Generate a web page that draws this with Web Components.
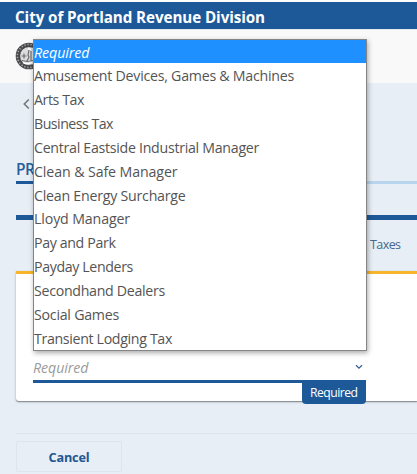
<!DOCTYPE html>
<html lang="en"><head><meta charset="utf-8"><title>City of Portland Revenue Division</title>
<style>
html,body{margin:0;height:474px;overflow:hidden;background:#e8eef5}
body{font-family:"Open Sans","Noto Sans",sans-serif}
</style></head><body>
<revenue-page></revenue-page>
<script>
/* One line of text whose tracking is adjusted to span a given width. */
class FitText extends HTMLElement{
  connectedCallback(){
    const r=this.attachShadow({mode:'open'});
    r.innerHTML='<style>:host{display:inline-block;white-space:pre}span{display:inline-block}</style><span><slot></slot></span>';
    const s=r.querySelector('span'),w=+this.getAttribute('width');
    if(w)s.style.letterSpacing=((w-s.getBoundingClientRect().width)/this.textContent.length)+'px';
  }
}
class SiteHeader extends HTMLElement{
  connectedCallback(){
    this.attachShadow({mode:'open'}).innerHTML=`<style>
    :host{display:block;border-top:2px solid #fcfefe}
    .bar{height:27px;background:#1d5998;color:#fff;font-weight:700;font-size:15.2px;line-height:30px;padding-left:15px}
    .logo{background:#f9f9f9;border-top:1px solid #e4eaf0;padding:12px 0 0 15px;box-sizing:border-box;height:54px}
    svg{display:block}</style>
    <div class="bar"><fit-text width="250">City of Portland Revenue Division</fit-text></div>
    <div class="logo"><svg width="28" height="28" viewBox="0 0 28 28">
      <circle cx="14" cy="14" r="13.3" fill="#4a4a4d"/>
      <circle cx="14" cy="14" r="11.6" fill="none" stroke="#a5a5a5" stroke-width="1.6" stroke-dasharray="1.3 1.8"/>
      <circle cx="14" cy="14" r="9.4" fill="#dcdcdd" stroke="#303033" stroke-width=".8"/>
      <path d="M6.5 14h5M9 11.5v5M14 8l-1 5 1 2-2 4M16 9v10M7 18.5l5 1 6-1" fill="none" stroke="#6c6d70" stroke-width="1.2"/>
      <path d="M8 20.5q5 2.5 9 0M13 6.5l3 1" fill="none" stroke="#fff" stroke-width="1.4"/></svg></div>`;
  }
}
class OptionMenu extends HTMLElement{
  connectedCallback(){
    const o=[['Amusement Devices, Games & Machines',260],['Arts Tax',50],['Business Tax',79],['Central Eastside Industrial Manager',225],['Clean & Safe Manager',143.5],['Clean Energy Surcharge',151.5],['Lloyd Manager',96],['Pay and Park',81.5],['Payday Lenders',99],['Secondhand Dealers',131],['Social Games',85],['Transient Lodging Tax',138]];
    this.attachShadow({mode:'open'}).innerHTML=`<style>
    :host{display:block;box-sizing:border-box;width:334px;height:312px;background:#fff;border:1px solid #858585;box-shadow:1px 2px 5px #0005;color:#545454;font-size:14.2px;overflow:hidden}
    div{height:23.92px;line-height:25px}
    .on{background:#1e90ff;color:#fff;font-style:italic;margin:-1px -1px 0 0;height:24px;line-height:27px}
    </style><div class="on"><fit-text width="55.5">Required</fit-text></div>`+o.map(([t,w])=>`<div><fit-text width="${w}">${t.replace('&','&amp;')}</fit-text></div>`).join('');
  }
}
class SelectField extends HTMLElement{
  connectedCallback(){
    this.attachShadow({mode:'open'}).innerHTML=`<style>
    :host{display:block;position:relative;width:333px}
    .box{height:29px;border-bottom:3px solid #1d5998;display:flex;align-items:center;justify-content:space-between;font-style:italic;font-size:14.2px;color:#9b9b9b;box-sizing:border-box}
    svg{margin:0 3px 0 0}
    .tip{position:absolute;right:0;top:27px;width:64px;height:23px;box-sizing:border-box;background:#1d5998;color:#fff;border-radius:0 0 4px 4px;font-size:12.2px;line-height:23px;padding-left:8px}
    </style><div class="box"><fit-text width="55.5">Required</fit-text><svg width="8" height="6" viewBox="0 0 8 6"><path d="M1 1.2 4 4.2 7 1.2" fill="none" stroke="#376398" stroke-width="1.3"/></svg></div>
    <div class="tip"><fit-text width="47.5">Required</fit-text></div>`;
  }
}
class FormCard extends HTMLElement{
  connectedCallback(){
    this.attachShadow({mode:'open'}).innerHTML=`<style>
    :host{display:flex;flex-direction:column;justify-content:flex-end;box-sizing:border-box;height:129.5px;border-top:3px solid #f6b52d;background:#fff;border-radius:0 0 0 3px;box-shadow:0 1px 1px #858c93,0 1px 3px #0003;padding:0 0 17.5px 17px}</style><slot></slot>`;
  }
}
class RevenuePage extends HTMLElement{
  connectedCallback(){
    this.attachShadow({mode:'open'}).innerHTML=`<style>
    :host{display:block;position:relative;height:474px;overflow:hidden}
    main{padding-left:16px}
    .back{height:66px;padding:15px 0 0 7px;box-sizing:border-box}
    svg{display:block}
    .title{height:32px;line-height:40px;font-size:15.5px;font-weight:600;color:#255e99;box-sizing:border-box}
    .prog{display:flex;height:3px}.prog i{flex:1;background:#b8d5ed}.prog b{width:180px;background:#1d5998}
    .rule{height:5px;margin-top:30.5px;background:#1d5998}
    .tab{height:51.5px;line-height:50px;box-sizing:border-box;padding-left:354px;font-size:12.5px;color:#47688f}
    .sep{height:1px;background:#dfe5eb;margin-top:32.5px}
    .cancel{display:flex;justify-content:center;width:106px;height:31px;margin-top:7px;border:1px solid #dee5ec;border-radius:2px;box-sizing:border-box;color:#225792;font-weight:700;font-size:12.7px;line-height:30px}
    option-menu{position:absolute;left:33px;top:39px}
    </style><site-header></site-header><main>
    <div class="back"><svg width="7" height="12" viewBox="0 0 7 12"><path d="M5.8 1.5 1.3 6l4.5 4.5" fill="none" stroke="#777" stroke-width="1.6"/></svg></div>
    <div class="title"><fit-text width="18.5">PR</fit-text></div><div class="prog"><b></b><i></i></div><div class="rule"></div>
    <div class="tab"><fit-text width="30.5">Taxes</fit-text></div>
    <form-card><select-field></select-field></form-card><div class="sep"></div>
    <div class="cancel"><fit-text width="41">Cancel</fit-text></div></main><option-menu></option-menu>`;
  }
}
customElements.define('fit-text',FitText);
customElements.define('site-header',SiteHeader);
customElements.define('option-menu',OptionMenu);
customElements.define('select-field',SelectField);
customElements.define('form-card',FormCard);
customElements.define('revenue-page',RevenuePage);
</script></body></html>
